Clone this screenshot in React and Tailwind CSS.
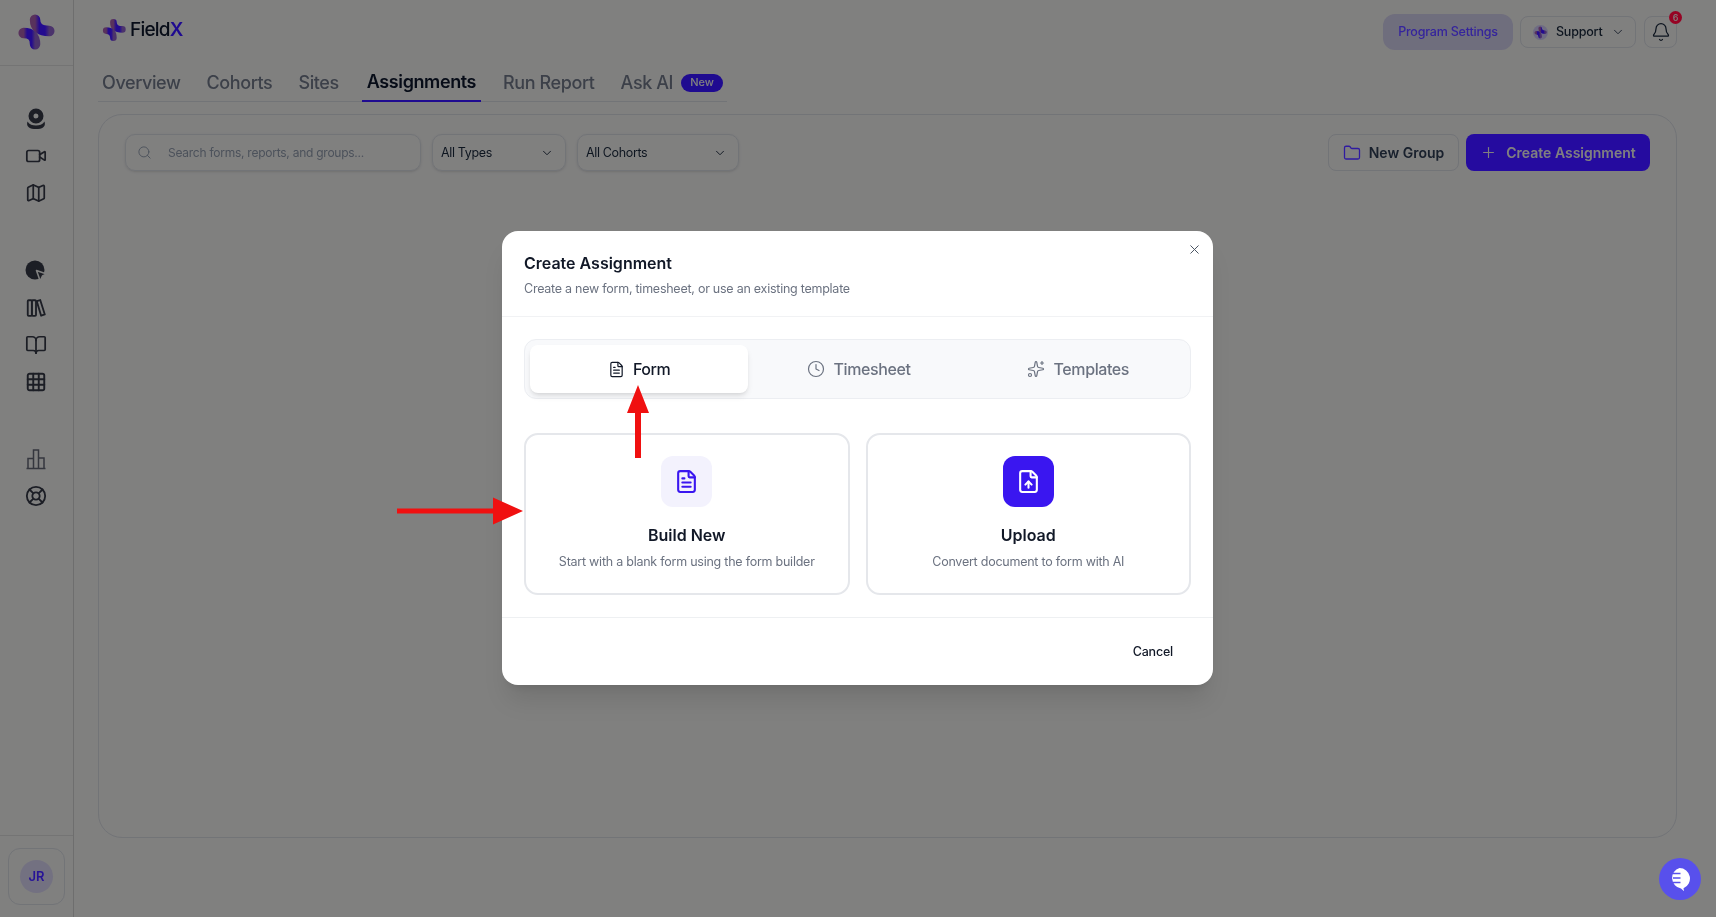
import React from "react";
import {
  BookOpen,
  Bell,
  ChevronDown,
  Clock,
  FileText,
  FileUp,
  Folder,
  Grid3x3,
  LifeBuoy,
  Map as MapIcon,
  Plus,
  Search,
  Sparkles,
  Video,
  X,
} from "lucide-react";

function Logo({ id, className }) {
  return (
    <svg viewBox="0 0 40 40" className={className}>
      <defs>
        <linearGradient id={id} x1="0" y1="0" x2="1" y2="0">
          <stop offset="0" stopColor="#a06ca4" />
          <stop offset="0.3" stopColor="#4020d0" />
          <stop offset="0.7" stopColor="#4020d0" />
          <stop offset="1" stopColor="#8c6cb8" />
        </linearGradient>
      </defs>
      <path d="M19 7C19 15 24 19 34 19" fill="none" stroke={`url(#${id})`} strokeWidth="11" strokeLinecap="round" />
      <path d="M7 21C15 21 19 25 19 33" fill="none" stroke={`url(#${id})`} strokeWidth="11" strokeLinecap="round" />
    </svg>
  );
}

function WebcamIcon() {
  return (
    <svg viewBox="0 0 24 24" className="w-6 h-6 text-[#3a3d46]" fill="currentColor">
      <path fillRule="evenodd" d="M12 1.500a7.500 7.500 0 1 1 0 15 7.500 7.500 0 0 1 0-15Zm0 5a2.500 2.500 0 1 0 0 5 2.500 2.500 0 0 0 0-5Z" />
      <path d="M3.500 14.500C5.500 17.500 8.500 18.500 12 18.500s6.500-1 8.500-4c.8 2.500.5 4.500-1.500 6-1.500 1-4 1.500-7 1.500s-5.500-.5-7-1.500c-2-1.500-2.300-3.500-1.500-6Z" />
    </svg>
  );
}

function PieCursorIcon() {
  return (
    <svg viewBox="0 0 24 24" className="w-6 h-6 text-[#3a3d46]">
      <circle cx="11" cy="11" r="9.500" fill="currentColor" />
      <path d="M12.500 11.500 22.500 15l-4 2-2.300 5Z" fill="currentColor" stroke="#ffffff" strokeWidth="1.600" strokeLinejoin="round" />
    </svg>
  );
}

function BooksIcon() {
  return (
    <svg viewBox="0 0 24 24" className="w-[22px] h-[22px] text-[#3a3d46]" fill="none" stroke="currentColor" strokeWidth="2" strokeLinejoin="round">
      <rect x="3" y="3.500" width="4.500" height="17" rx="1" />
      <rect x="7.500" y="3.500" width="4.500" height="17" rx="1" />
      <path d="M12.800 4.500 16.600 3.300l5 15.700-4 1.400Z" />
    </svg>
  );
}

function BarsIcon() {
  return (
    <svg viewBox="0 0 24 24" className="w-6 h-6 text-[#6b6e78]" fill="none" stroke="currentColor" strokeWidth="1.500">
      <path d="M2.500 21.500h19M4 21.500V11.500h5.500v10M9.500 21.500V3h5v18.500M14.500 21.500V11h5.500v10.500" />
    </svg>
  );
}

function NavItem({ children }) {
  return <div className="h-[37px] pr-px flex items-center justify-center">{children}</div>;
}

const lucideNav = "w-[22px] h-[22px] text-[#3a3d46]";

function Sidebar() {
  return (
    <aside className="w-[74px] shrink-0 border-r border-[#dcdcdc] flex flex-col">
      <div className="h-[66px] pr-px border-b border-[#e8e8e8] flex items-center justify-center">
        <Logo id="logo-side" className="w-[38px] h-[38px] -mt-[2px]" />
      </div>
      <div className="pt-[34px]">
        <NavItem><WebcamIcon /></NavItem>
        <NavItem><Video className={lucideNav} strokeWidth={1.9} /></NavItem>
        <NavItem><MapIcon className={lucideNav} strokeWidth={1.9} /></NavItem>
      </div>
      <div className="mt-[41px]">
        <NavItem><PieCursorIcon /></NavItem>
        <NavItem><BooksIcon /></NavItem>
        <NavItem><BookOpen className={lucideNav} strokeWidth={1.9} /></NavItem>
        <NavItem><Grid3x3 className={lucideNav} strokeWidth={2.1} /></NavItem>
      </div>
      <div className="mt-[40px]">
        <NavItem><BarsIcon /></NavItem>
        <NavItem><LifeBuoy className={lucideNav} strokeWidth={2} /></NavItem>
      </div>
      <div className="mt-auto border-t border-[#e8e8e8] px-2 py-3">
        <div className="h-[57px] border border-[#e5e7eb] rounded-xl flex items-center justify-center">
          <div className="w-[33px] h-[33px] rounded-full bg-[#e6e3f8] text-[#4a30e0] text-[13px] font-semibold flex items-center justify-center">
            JR
          </div>
        </div>
      </div>
    </aside>
  );
}

function TopBar() {
  return (
    <div className="h-16 flex items-center justify-between">
      <div className="flex items-center gap-[4px] pl-[4px] -mt-1">
        <Logo id="logo-top" className="w-6 h-6" />
        <span className="text-[19px] leading-6 font-medium tracking-[-0.8px] text-[#111827]">
          Field<span className="font-semibold text-[#3a1fd0]">X</span>
        </span>
      </div>
      <div className="flex items-center">
        <button className="w-[130px] h-9 pt-px rounded-xl bg-[#dedcf0] text-[#6650f0] text-[12.500px] font-medium tracking-[-0.2px]">
          Program Settings
        </button>
        <button className="ml-[7px] w-[116px] h-8 rounded-lg border border-[#e5e7eb] flex items-center pl-[12px] gap-[8px] text-[12.500px] font-medium tracking-[-0.2px] text-[#1f2937]">
          <span className="w-[15px] h-[15px] rounded-full bg-[#dcd8f8] flex items-center justify-center">
            <Logo id="logo-support" className="w-[13px] h-[13px]" />
          </span>
          Support
          <ChevronDown className="w-[14px] h-[14px] text-[#374151]" strokeWidth={1.6} />
        </button>
        <div className="ml-2 relative w-[33px] h-8 rounded-lg border border-[#e5e7eb] flex items-center justify-center text-[#1f2937]">
          <Bell className="w-5 h-5" strokeWidth={1.5} />
          <span className="absolute -top-[6px] -right-[6px] w-[13px] h-[13px] rounded-full bg-[#e11d48] text-white text-[9px] leading-[13px] text-center font-medium">
            6
          </span>
        </div>
      </div>
    </div>
  );
}

function Tabs() {
  const tab = "h-[37px] flex items-center px-1 whitespace-nowrap text-[18px] font-medium tracking-[-0.4px] text-[#7b808c]";
  return (
    <div className="w-[629px] h-[38px] border-b border-[#e5e7eb] flex gap-[18px]">
      <div className={tab}>Overview</div>
      <div className={tab}>Cohorts</div>
      <div className={tab}>Sites</div>
      <div className="ml-px h-[38px] pb-px flex items-center px-[5px] whitespace-nowrap text-[18px] font-semibold tracking-[-0.4px] text-[#111827] border-b-2 border-[#3a1fd0]">
        Assignments
      </div>
      <div className={tab}>Run Report</div>
      <div className="h-[37px] flex items-center pl-1 gap-2 whitespace-nowrap text-[18px] font-medium tracking-[-0.4px] text-[#7b808c]">
        Ask AI
        <span className="w-[42px] h-[18px] rounded-full bg-[#3a1fd0] text-white text-[11px] tracking-normal font-medium flex items-center justify-center">
          New
        </span>
      </div>
    </div>
  );
}

function Toolbar() {
  const select = "h-[37px] pt-px rounded-[10px] border border-[#e5e7eb] flex items-center justify-between pl-2 pr-[11px] text-[12.500px] tracking-[-0.35px] text-[#1f2937] shadow-sm";
  return (
    <div className="flex items-center justify-between">
      <div className="flex items-center gap-[11px]">
        <div className="w-[296px] h-[37px] rounded-[10px] border border-[#e5e7eb] shadow-sm flex items-center pl-[11px] gap-[16px] text-[12px] tracking-[-0.25px] text-[#9ca3af]">
          <Search className="w-[15px] h-[15px]" strokeWidth={1.5} />
          Search forms, reports, and groups...
        </div>
        <div className={`w-[134px] ${select}`}>
          All Types
          <ChevronDown className="w-[14px] h-[14px]" strokeWidth={1.6} />
        </div>
        <div className={`w-[162px] ${select}`}>
          All Cohorts
          <ChevronDown className="w-[14px] h-[14px]" strokeWidth={1.6} />
        </div>
      </div>
      <div className="flex items-center gap-[7px]">
        <button className="w-[131px] h-[37px] rounded-lg border border-[#e5e7eb] flex items-center justify-center gap-[8px] text-[14px] font-semibold text-[#374151]">
          <Folder className="w-[18px] h-[18px] text-[#5a3ff0]" strokeWidth={1.7} />
          New Group
        </button>
        <button className="w-[184px] h-[37px] rounded-lg bg-[#4320e6] flex items-center justify-center gap-[9px] text-[14px] font-semibold text-white">
          <Plus className="w-[17px] h-[17px]" strokeWidth={1.6} />
          Create Assignment
        </button>
      </div>
    </div>
  );
}

function ModalTabs() {
  const tab = "flex items-center justify-center gap-[9px] text-[16px] font-medium tracking-[-0.4px] text-[#6b7280]";
  return (
    <div className="h-[60px] rounded-xl border border-[#eceef2] bg-[#f8f9fb] p-[5px] grid grid-cols-3">
      <div className="flex items-center justify-center gap-[8px] rounded-lg bg-white shadow-md text-[16px] font-medium tracking-[-0.4px] text-[#111827]">
        <FileText className="w-[17px] h-[17px]" strokeWidth={1.7} />
        Form
      </div>
      <div className={`pl-[2px] ${tab}`}>
        <Clock className="w-[18px] h-[18px]" strokeWidth={1.6} />
        Timesheet
      </div>
      <div className={`pl-1 ${tab}`}>
        <Sparkles className="w-[18px] h-[18px]" strokeWidth={1.6} />
        Templates
      </div>
    </div>
  );
}

function OptionCard({ icon, title, desc }) {
  return (
    <div className="h-[162px] rounded-[14px] border-2 border-[#e5e7eb] flex flex-col items-center pt-[21px]">
      {icon}
      <div className="mt-[18px] text-[16px] leading-5 font-semibold text-[#111827]">{title}</div>
      <div className="mt-[7px] text-[12.500px] leading-5 tracking-[-0.24px] text-[#6b7280]">{desc}</div>
    </div>
  );
}

function Modal() {
  return (
    <div className="w-[711px] h-[454px] rounded-2xl bg-white shadow-xl flex flex-col relative">
      <X className="absolute top-[11px] right-[11px] w-[15px] h-[15px] text-[#4b5563]" strokeWidth={1.6} />
      <div className="px-[22px] pt-[22px] pb-[17px] border-b border-[#f1f2f4]">
        <div className="text-[16px] leading-5 font-semibold text-[#111827]">Create Assignment</div>
        <div className="mt-[6px] text-[12.500px] leading-5 tracking-[-0.25px] text-[#6b7280]">
          Create a new form, timesheet, or use an existing template
        </div>
      </div>
      <div className="px-[22px] pt-[22px] pb-[22px] border-b border-[#eef0f2]">
        <ModalTabs />
        <div className="mt-[34px] grid grid-cols-2 gap-4">
          <OptionCard
            icon={
              <div className="w-[51px] h-[51px] rounded-xl bg-[#f3f2fd] flex items-center justify-center">
                <FileText className="w-[25px] h-[25px] text-[#3a16f0]" strokeWidth={2} />
              </div>
            }
            title="Build New"
            desc="Start with a blank form using the form builder"
          />
          <OptionCard
            icon={
              <div className="w-[51px] h-[51px] rounded-xl bg-[#3a16f0] flex items-center justify-center">
                <FileUp className="w-[25px] h-[25px] text-white" strokeWidth={2} />
              </div>
            }
            title="Upload"
            desc="Convert document to form with AI"
          />
        </div>
      </div>
      <div className="flex-1 pt-px flex items-center justify-end pr-[40px]">
        <button className="text-[12.500px] tracking-[-0.2px] font-medium text-[#111827]">Cancel</button>
      </div>
    </div>
  );
}

export default function App() {
  return (
    <div className="relative w-full h-[917px] flex overflow-hidden bg-white font-[Inter,sans-serif]">
      <Sidebar />
      <main className="flex-1 pl-6 pr-[39px]">
        <TopBar />
        <Tabs />
        <section className="mt-3 h-[724px] rounded-[24px] border border-[#e5e7eb] pt-[19px] pl-[26px] pr-[26px]">
          <Toolbar />
        </section>
      </main>

      {/* dialog layer */}
      <div className="absolute inset-0 z-40 backdrop-brightness-50 backdrop-saturate-150 flex items-center justify-center pr-px pb-px">
        <Modal />
      </div>

      {/* red annotation arrows */}
      <svg className="absolute z-50 left-[397px] top-[497px] w-[126px] h-[28px]" viewBox="0 0 126 28">
        <path d="M0 11.500h96V0.500L126 14 96 27.500V16.500H0Z" fill="#f01010" />
      </svg>
      <svg className="absolute z-50 left-[626px] top-[385px] w-6 h-[73px]" viewBox="0 0 24 73">
        <path d="M12 0 23 28H15V73H9V28H1Z" fill="#f01010" />
      </svg>

      {/* chat bubble */}
      <div className="absolute z-50 left-[1659px] top-[858px] w-[42px] h-[42px] rounded-full bg-[#5850ec] flex items-center justify-center">
        <svg viewBox="0 0 24 24" className="w-6 h-6">
          <path d="M11.500 1a10.500 10.500 0 0 1 4 20.200l.5 3-3-2.800A10.500 10.500 0 0 1 11.500 1Z" fill="#ffffff" />
          <path d="M5 6.500h7.500M5 11h7.500M5 15.500h7.500" stroke="#5850ec" strokeWidth="1.600" />
        </svg>
      </div>
    </div>
  );
}
